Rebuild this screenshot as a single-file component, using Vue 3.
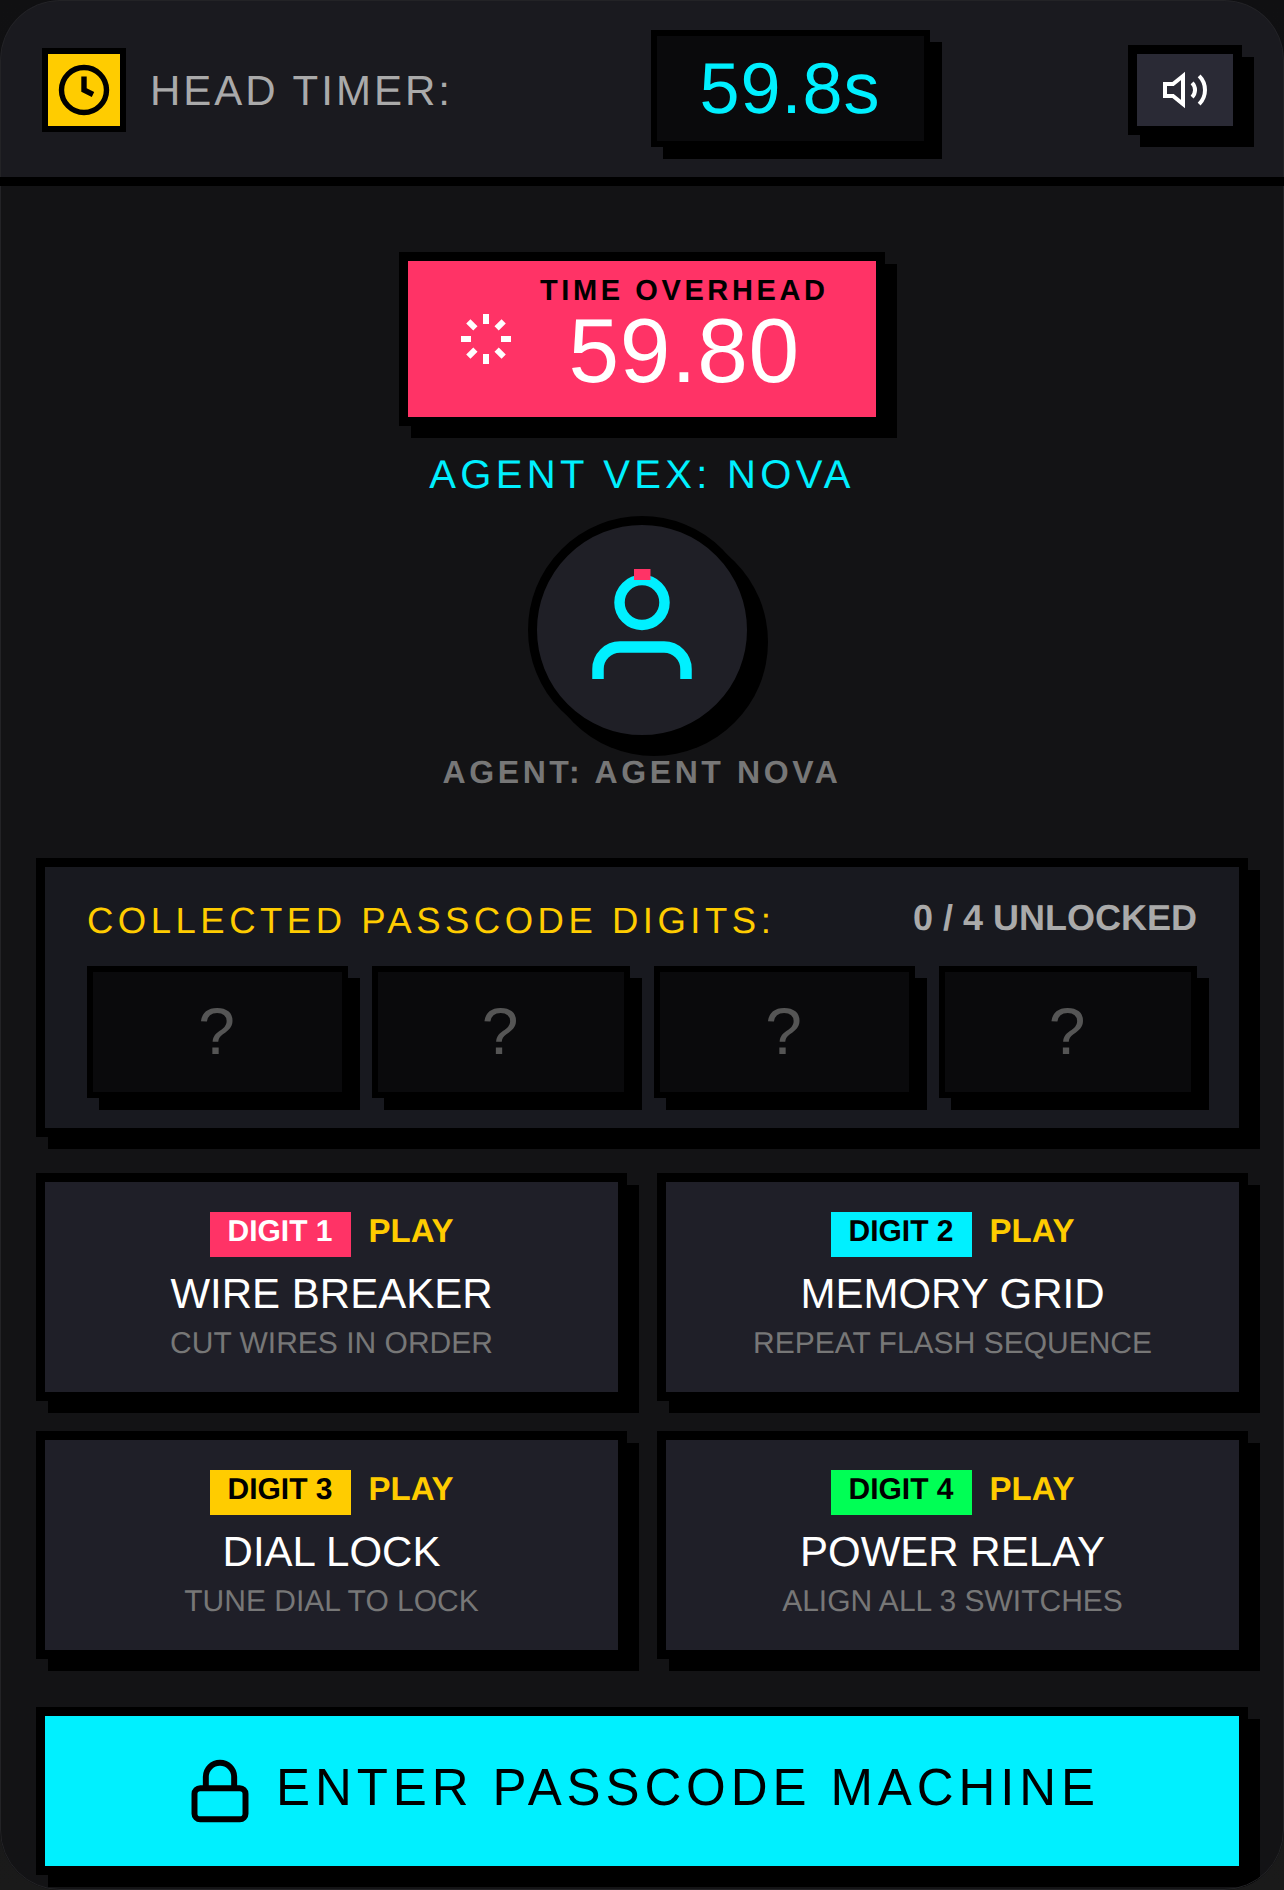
<script setup>
const slots = [1, 2, 3, 4]
const games = [
  { id: 1, cls: 'pink', name: 'WIRE BREAKER', sub: 'CUT WIRES IN ORDER' },
  { id: 2, cls: 'cyan', name: 'MEMORY GRID', sub: 'REPEAT FLASH SEQUENCE' },
  { id: 3, cls: 'yellow', name: 'DIAL LOCK', sub: 'TUNE DIAL TO LOCK' },
  { id: 4, cls: 'green', name: 'POWER RELAY', sub: 'ALIGN ALL 3 SWITCHES' }
]
</script>

<template>
  <div class="device">
    <header class="top">
      <div class="top-left">
        <div class="clock-box">
          <svg width="54" height="54" viewBox="0 0 24 24" fill="none" stroke="#000" stroke-width="2.4">
            <circle cx="12" cy="12" r="10" />
            <polyline points="12 6 12 12 16 14" />
          </svg>
        </div>
        <span class="head-label">HEAD TIMER:</span>
      </div>
      <div class="timer">59.8s</div>
      <div class="sound">
        <svg width="48" height="48" viewBox="0 0 24 24" fill="none" stroke="#fff" stroke-width="2">
          <polygon points="11 5 6 9 2 9 2 15 6 15 11 19 11 5" />
          <path d="M15.54 8.46a5 5 0 0 1 0 7.07" />
          <path d="M19.07 4.93a10 10 0 0 1 0 14.14" />
        </svg>
      </div>
    </header>

    <main class="main">
      <section class="hero">
        <div class="overhead">
          <svg class="spin" width="60" height="60" viewBox="0 0 24 24" fill="none" stroke="#fff" stroke-width="2.4">
            <path d="M12 2v4M12 18v4M4.93 4.93l2.83 2.83M16.24 16.24l2.83 2.83M2 12h4M18 12h4M4.93 19.07l2.83-2.83M16.24 7.76l2.83-2.83" />
          </svg>
          <div class="overhead-text">
            <div class="overhead-label">TIME OVERHEAD</div>
            <div class="overhead-value">59.80</div>
          </div>
        </div>
        <div class="vex">AGENT VEX: NOVA</div>
        <div class="avatar">
          <svg class="person" width="210" height="210" viewBox="537 525 210 210" fill="none">
            <circle cx="642" cy="602.5" r="22.5" stroke="#00f0ff" stroke-width="10.5" />
            <path d="M598 679v-10a22 22 0 0 1 22-22h44a22 22 0 0 1 22 22v10" stroke="#00f0ff" stroke-width="11.5" />
            <rect x="634" y="569" width="16.5" height="11" fill="#ff3366" />
          </svg>
        </div>
        <div class="agent-name">AGENT: AGENT NOVA</div>
      </section>

      <section class="panel">
        <div class="panel-head">
          <span class="panel-title">COLLECTED PASSCODE DIGITS:</span>
          <span class="panel-count">0 / 4 UNLOCKED</span>
        </div>
        <div class="slots">
          <div v-for="s in slots" :key="s" class="slot">?</div>
        </div>
      </section>

      <section class="games">
        <div v-for="g in games" :key="g.id" class="game">
          <div class="tags">
            <span class="badge" :class="g.cls">DIGIT {{ g.id }}</span>
            <span class="play">PLAY</span>
          </div>
          <div class="game-name">{{ g.name }}</div>
          <div class="game-sub">{{ g.sub }}</div>
        </div>
      </section>

      <button class="enter">
        <svg class="lock" width="68" height="68" viewBox="0 0 24 24" fill="none" stroke="#000" stroke-width="2.1">
          <rect x="3" y="11" width="18" height="11" rx="2" />
          <path d="M7 11V7a5 5 0 0 1 10 0v4" />
        </svg>
        <span class="enter-text">ENTER PASSCODE MACHINE</span>
      </button>
    </main>
  </div>
</template>

<style>
html, body { margin: 0; }
body { background: linear-gradient(#101012, #1a1a1a); }
</style>

<style scoped>
.device {
  box-sizing: border-box;
  width: 1284px;
  height: 1890px;
  background: #131315;
  border-radius: 60px;
  overflow: hidden;
  font-family: "Liberation Sans", Arial, sans-serif;
  text-rendering: geometricPrecision;
  position: relative;
}
.device::after {
  content: "";
  position: absolute;
  inset: 0;
  border: 1px solid #232326;
  border-radius: 60px;
  pointer-events: none;
}
.top {
  height: 186px;
  box-sizing: border-box;
  background: #1a1a1f;
  padding: 3px 42px 9px;
  display: flex;
  align-items: center;
  justify-content: space-between;
  position: relative;
}
.top::after {
  content: "";
  position: absolute;
  left: 0;
  right: 0;
  bottom: 0;
  height: 9px;
  background: #000;
  z-index: 2;
}
.top-left { display: flex; align-items: center; gap: 24px; width: 410px; }
.clock-box {
  box-sizing: border-box;
  width: 84px;
  height: 84px;
  flex: none;
  background: #ffcc00;
  border: 6px solid #000;
  display: flex;
  align-items: center;
  justify-content: center;
}
.head-label { color: #aaa; font-size: 42px; letter-spacing: 3px; white-space: nowrap; margin-top: 2px; }
.timer {
  box-sizing: border-box;
  width: 279px;
  height: 117px;
  margin-top: -3px;
  background: #0a0a0c;
  border: 6px solid #000;
  box-shadow: 12px 12px 0 #000;
  color: #00f0ff;
  font-size: 72px;
  letter-spacing: 1px;
  display: flex;
  align-items: center;
  justify-content: center;
}
.sound {
  box-sizing: border-box;
  width: 114px;
  height: 90px;
  background: #2a2a35;
  border: 9px solid #000;
  box-shadow: 12px 12px 0 #000;
  display: flex;
  align-items: center;
  justify-content: center;
}
.main { padding: 66px 36px 0; }
.hero { display: flex; flex-direction: column; align-items: center; }
.overhead {
  box-sizing: border-box;
  width: 486px;
  height: 174px;
  background: #ff3366;
  border: 9px solid #000;
  box-shadow: 12px 12px 0 #000;
  display: flex;
  align-items: center;
  padding-left: 48px;
  gap: 24px;
}
.spin { flex: none; }
.overhead-text { display: flex; flex-direction: column; align-items: center; padding-bottom: 4px; }
.overhead-label { color: #000; font-weight: 700; font-size: 29px; letter-spacing: 3.6px; line-height: 30px; white-space: nowrap; }
.overhead-value { color: #fff; font-size: 91px; line-height: 92px; letter-spacing: 0.75px; }
.vex { margin-top: 26px; color: #00f0ff; font-size: 40px; letter-spacing: 4.3px; line-height: 46px; }
.avatar {
  box-sizing: border-box;
  margin-top: 18px;
  width: 228px;
  height: 228px;
  border-radius: 50%;
  background: #1f1f26;
  border: 9px solid #000;
  box-shadow: 12px 12px 0 #000;
}
.person { display: block; }
.agent-name { margin-top: 10px; color: #777; font-weight: 700; font-size: 32px; letter-spacing: 3.6px; line-height: 36px; }
.panel {
  box-sizing: border-box;
  margin-top: 68px;
  height: 279px;
  background: #18191f;
  border: 9px solid #000;
  box-shadow: 12px 12px 0 #000;
  padding: 30px 42px 0;
}
.panel-head { box-sizing: border-box; display: flex; justify-content: space-between; align-items: center; height: 45px; padding-top: 3px; }
.panel-title { color: #ffcc00; font-size: 36.5px; letter-spacing: 4.5px; white-space: nowrap; }
.panel-count { color: #aaa; font-weight: 700; font-size: 36px; margin-bottom: 6px; white-space: nowrap; }
.slots { display: grid; grid-template-columns: 261px 258px 261px 258px; gap: 24px; margin-top: 24px; }
.slot {
  box-sizing: border-box;
  height: 132px;
  background: #0a0a0c;
  border: 6px solid #000;
  box-shadow: 12px 12px 0 #000;
  color: #555;
  font-size: 66px;
  padding: 0 2px 2px 0;
  display: flex;
  align-items: center;
  justify-content: center;
}
.games { display: grid; grid-template-columns: 1fr 1fr; gap: 30px; margin-top: 36px; }
.game {
  box-sizing: border-box;
  height: 228px;
  background: #1f1f28;
  border: 9px solid #000;
  box-shadow: 12px 12px 0 #000;
  padding-top: 30px;
  display: flex;
  flex-direction: column;
  align-items: center;
}
.tags { display: flex; align-items: flex-start; gap: 18px; height: 45px; }
.badge { box-sizing: border-box; height: 45px; padding: 0 18px; font-weight: 700; font-size: 30px; line-height: 40px; color: #000; }
.badge.pink { background: #ff3366; color: #fff; }
.badge.cyan { background: #00f0ff; }
.badge.yellow { background: #ffcc00; }
.badge.green { background: #00ff55; }
.play { color: #ffcc00; font-weight: 700; font-size: 33px; line-height: 38px; }
.game-name { margin-top: 13px; color: #fff; font-size: 42px; line-height: 48px; }
.game-sub { margin-top: 8px; color: #777; font-size: 30px; line-height: 36px; }
.enter {
  box-sizing: border-box;
  margin-top: 48px;
  width: 100%;
  height: 168px;
  background: #00f0ff;
  border: 9px solid #000;
  box-shadow: 12px 12px 0 #000;
  color: #000;
  font-family: inherit;
  font-size: 51px;
  letter-spacing: 4.9px;
  display: flex;
  align-items: center;
  justify-content: center;
  gap: 22px;
  padding: 0;
}
.lock { margin-left: 2px; }
.enter-text { margin-bottom: 8px; }
</style>
